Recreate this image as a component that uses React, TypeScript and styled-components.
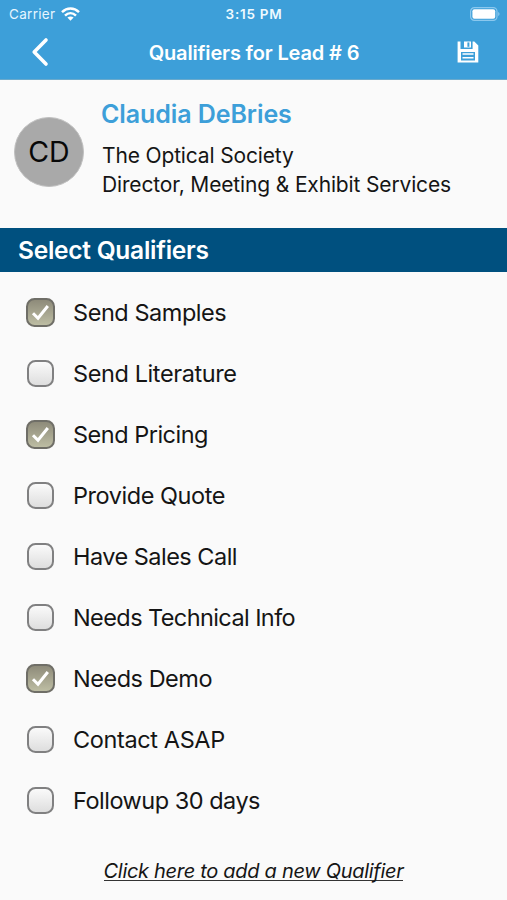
import React from "react";
import styled, { createGlobalStyle } from "styled-components";

const GlobalStyle = createGlobalStyle`
  * { box-sizing: border-box; }
  body { margin: 0; background: #fafafa; }
`;

const Screen = styled.main`
  width: 507px;
  height: 900px;
  display: flex;
  flex-direction: column;
  overflow: hidden;
  background: #fafafa;
  color: #151515;
  font-family: Inter, "Liberation Sans", sans-serif;
  white-space: nowrap;
`;

const Header = styled.header`
  height: 80px;
  flex: none;
  background: #3d9fd9;
  border-bottom: 1px solid #6baacc;
  color: #fff;
`;

const StatusBar = styled.div`
  height: 27px;
  display: grid;
  grid-template-columns: 1fr auto 1fr;
  align-items: center;
  padding: 0 7px 0 9px;
  font-size: 13px;
`;

const Carrier = styled.div`
  display: flex;
  align-items: center;
  gap: 6px;
  color: #e6f6ff;
  font-size: 13.5px;
  letter-spacing: 0.3px;
`;

const Clock = styled.div`
  font-size: 13.5px;
  font-weight: 600;
  letter-spacing: 0.75px;
  color: #eefaff;
  margin-right: 1px;
`;

const BatteryIcon = styled.svg`
  justify-self: end;
`;

const NavBar = styled.div`
  height: 52px;
  display: grid;
  grid-template-columns: 80px 1fr 80px;
  align-items: center;
`;

const Title = styled.h1`
  margin: 0;
  text-align: center;
  font-size: 20px;
  font-weight: 600;
  line-height: 24px;
  letter-spacing: -0.15px;
  padding-left: 1px;
`;

const IconButton = styled.button`
  display: flex;
  align-items: center;
  justify-content: center;
  height: 40px;
  padding: 0;
  border: 0;
  background: none;
  color: inherit;
`;

const SaveButton = styled(IconButton)`
  padding-left: 1px;
  padding-bottom: 3px;
`;

const BackButton = styled(IconButton)`
  padding-bottom: 2px;
`;

const Lead = styled.section`
  height: 148px;
  flex: none;
  display: flex;
  padding: 20px 15px 0 14px;
  gap: 18px;
`;

const Avatar = styled.div`
  width: 70px;
  height: 70px;
  margin-top: 17px;
  display: flex;
  align-items: center;
  justify-content: center;
  border-radius: 50%;
  border: 1px solid #c0c0c0;
  background: #a9a9a9;
  color: #080808;
  font-size: 28.5px;
  line-height: 1;
`;

const LeadName = styled.h2`
  margin: 0 0 12px -1px;
  font-size: 25px;
  line-height: 29px;
  font-weight: 600;
  letter-spacing: -0.08px;
  color: #3d9fd9;
`;

const LeadLine = styled.div`
  font-size: 21px;
  line-height: 29px;
  letter-spacing: -0.15px;
`;

const SectionTitle = styled.h2`
  height: 44px;
  flex: none;
  margin: 0;
  padding-left: 18px;
  background: #00507f;
  color: #fff;
  font-size: 24.5px;
  line-height: 44px;
  font-weight: 600;
  letter-spacing: -0.25px;
`;

const List = styled.ul`
  list-style: none;
  margin: 0;
  padding: 10px 0 0 25px;
`;

const Row = styled.li`
  height: 61px;
`;

const RowLabel = styled.label`
  height: 100%;
  display: flex;
  align-items: center;
  gap: 18px;
  font-size: 23.5px;
`;

const BoxSlot = styled.span`
  width: 30px;
  height: 30px;
  display: flex;
  align-items: center;
  justify-content: center;
`;

const Box = styled.span<{ $checked: boolean }>`
  width: ${(p) => (p.$checked ? 29 : 27)}px;
  height: ${(p) => (p.$checked ? 29 : 27)}px;
  display: flex;
  align-items: center;
  justify-content: center;
  border: 2px solid ${(p) => (p.$checked ? "#6f6e67" : "#808081")};
  border-radius: 8.5px;
  background: ${(p) =>
    p.$checked
      ? "linear-gradient(#8e8b7a, #bdbda3)"
      : "linear-gradient(#fafafa, #dedede)"};
`;

const LabelText = styled.span<{ $spacing: number }>`
  letter-spacing: ${(p) => p.$spacing}px;
`;

const AddLink = styled.a`
  align-self: center;
  margin-top: 29px;
  font-size: 20px;
  line-height: 22px;
  height: 21px;
  letter-spacing: -0.3px;
  font-style: italic;
  border-bottom: 1px solid #333;
`;

const qualifiers = [
  { label: "Send Samples", checked: true, spacing: -0.45 },
  { label: "Send Literature", checked: false, spacing: -0.4 },
  { label: "Send Pricing", checked: true, spacing: -0.5 },
  { label: "Provide Quote", checked: false, spacing: -0.45 },
  { label: "Have Sales Call", checked: false, spacing: -0.52 },
  { label: "Needs Technical Info", checked: false, spacing: -0.59 },
  { label: "Needs Demo", checked: true, spacing: -0.48 },
  { label: "Contact ASAP", checked: false, spacing: -0.38 },
  { label: "Followup 30 days", checked: false, spacing: -0.5 },
];

export default function App() {
  return (
    <>
      <GlobalStyle />
      <Screen>
        <Header>
          <StatusBar>
            <Carrier>
              <span>Carrier</span>
              <svg width="19" height="14" viewBox="0 0 19 14" fill="none" stroke="#fff" strokeWidth="2.5">
                <path d="M1 5.2C6 .4 13 .4 18 5.2" />
                <path d="M4 8.6C7.3 5.4 11.7 5.4 15 8.6" />
                <path d="M6.4 10.6Q9.5 8.2 12.6 10.6L9.5 13.8Z" fill="#fff" stroke="none" />
              </svg>
            </Carrier>
            <Clock>3:15 PM</Clock>
            <BatteryIcon width="30" height="14" viewBox="0 0 30 14">
              <rect x=".6" y=".6" width="26.4" height="12.8" rx="3.8" fill="none" stroke="#8bc8ee" strokeWidth="1.2" />
              <rect x="2.4" y="2.3" width="22.8" height="9.4" rx="2" fill="#fff" />
              <path d="M28.2 5C30 5.8 30 8.2 28.2 9Z" fill="#8bc8ee" />
            </BatteryIcon>
          </StatusBar>
          <NavBar>
            <BackButton aria-label="Back">
              <svg width="20" height="30" viewBox="0 0 20 30" fill="none" stroke="#fff" strokeWidth="3.6" strokeLinecap="round" strokeLinejoin="round">
                <path d="M16 3L4.2 15L16 27" />
              </svg>
            </BackButton>
            <Title>Qualifiers for Lead # 6</Title>
            <SaveButton aria-label="Save">
              <svg width="22" height="22" viewBox="0 0 22 22">
                <path fill="#fff" fillRule="evenodd" d="M.6.6H3.5V8H15.6V.6H17.3L21.3 4.6V21.4H.6ZM4 11V19.4H18V11Z" />
                <path fill="#fff" d="M7 .6H14V6.6H7ZM5.5 12.3H16.5V13.8H5.5ZM5.5 16H16.5V17.6H5.5Z" />
                <path fill="#3d9fd9" d="M10.4 1.4H12.4V5.8H10.4Z" />
              </svg>
            </SaveButton>
          </NavBar>
        </Header>
        <Lead>
          <Avatar>CD</Avatar>
          <div>
            <LeadName>Claudia DeBries</LeadName>
            <LeadLine>The Optical Society</LeadLine>
            <LeadLine>Director, Meeting &amp; Exhibit Services</LeadLine>
          </div>
        </Lead>
        <SectionTitle>Select Qualifiers</SectionTitle>
        <List>
          {qualifiers.map(({ label, checked, spacing }) => (
            <Row key={label}>
              <RowLabel>
                <BoxSlot>
                  <Box $checked={checked}>
                    {checked && (
                      <svg width="19" height="18" viewBox="0 0 19 18" fill="none" stroke="#fff" strokeWidth="3">
                        <path d="M2 9.2L7 14.3L16.8 2" />
                      </svg>
                    )}
                  </Box>
                </BoxSlot>
                <LabelText $spacing={spacing}>{label}</LabelText>
              </RowLabel>
            </Row>
          ))}
        </List>
        <AddLink>Click here to add a new Qualifier</AddLink>
      </Screen>
    </>
  );
}
